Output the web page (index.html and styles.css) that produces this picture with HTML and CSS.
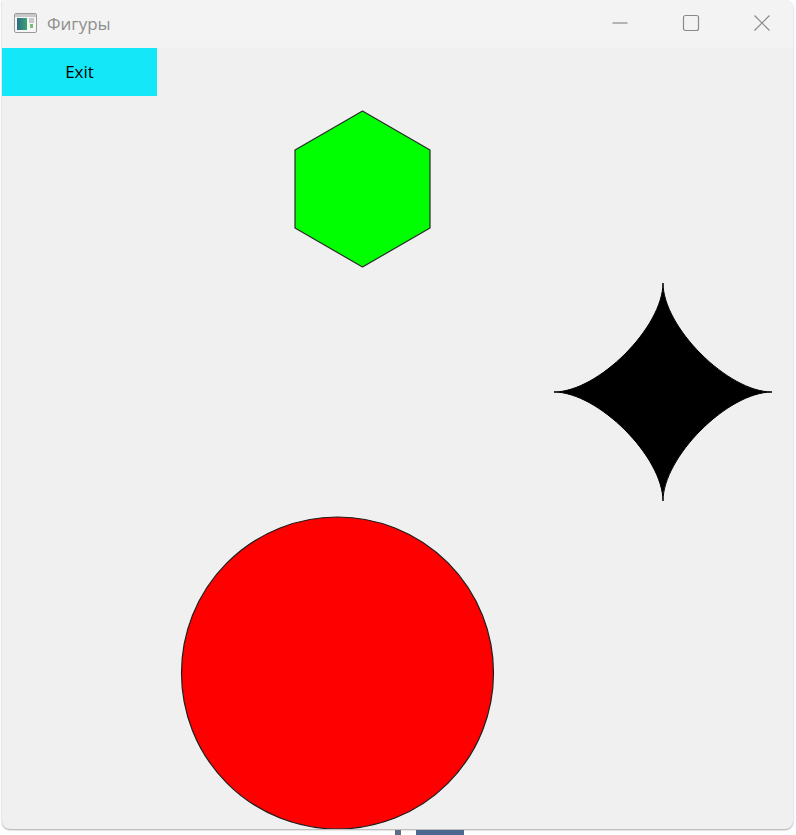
FILE: index.html
```html
<!DOCTYPE html>
<html lang="ru">
<head>
<meta charset="utf-8">
<title>Фигуры</title>
<link rel="stylesheet" href="styles.css">
</head>
<body>
<div class="window">
  <div class="titlebar">
    <div class="title">
      <svg class="app-icon" width="23" height="20" viewBox="0 0 23 20">
        <rect x="0.5" y="0.5" width="22" height="19" rx="1.5" fill="#f6f6f6" stroke="#9a9a9a"/>
        <rect x="1" y="1" width="21" height="3" fill="#c8c8c8"/>
        <defs>
          <linearGradient id="g" x1="0" y1="0" x2="1" y2="0">
            <stop offset="0" stop-color="#2e6a8a"/>
            <stop offset="1" stop-color="#3aa56a"/>
          </linearGradient>
        </defs>
        <rect x="3" y="5" width="10" height="12" fill="url(#g)"/>
        <rect x="15" y="5" width="5" height="5" fill="#c9c9c9"/>
        <rect x="16" y="11" width="3" height="4" fill="#7ac07a"/>
      </svg>
      <span class="title-text">Фигуры</span>
    </div>
    <div class="controls">
      <span class="ctl">
        <svg width="18" height="18" viewBox="0 0 18 18"><line x1="1.5" y1="9" x2="16.5" y2="9" stroke="#8a8a8a" stroke-width="1.2"/></svg>
      </span>
      <span class="ctl">
        <svg width="18" height="18" viewBox="0 0 18 18"><rect x="1.5" y="1.5" width="15" height="15" rx="2" fill="none" stroke="#8a8a8a" stroke-width="1.2"/></svg>
      </span>
      <span class="ctl">
        <svg width="18" height="18" viewBox="0 0 18 18"><path d="M1.5 1.5 L16.5 16.5 M16.5 1.5 L1.5 16.5" stroke="#8a8a8a" stroke-width="1.2"/></svg>
      </span>
    </div>
  </div>
  <div class="client">
    <button class="exit-btn">Exit</button>
    <svg class="canvas" width="791" height="781" viewBox="0 0 791 781">
      <polygon class="hex" points="360.5,63 428,102 428,180 360.5,219 293,180 293,102"/>
      <path class="star" d="M661 235 C661 279 726 344 770 344 C726 344 661 409 661 453 C661 409 596 344 552 344 C596 344 661 279 661 235 Z"/>
      <circle class="circle" cx="335.5" cy="625" r="156"/>
    </svg>
  </div>
</div>
<div class="below">
  <span class="task a"></span><span class="task b"></span>
</div>
</body>
</html>
```

FILE: styles.css
```css
html, body {
  margin: 0;
  padding: 0;
  background: #ffffff;
  width: 796px;
  height: 835px;
  overflow: hidden;
}

.window {
  margin-left: 2px;
  width: 791px;
  height: 829px;
  background: #f0f0f0;
  border-radius: 0 8px 8px 8px;
  box-shadow: 0 1px 2px rgba(0,0,0,0.35);
  overflow: hidden;
  display: flex;
  flex-direction: column;
}

.titlebar {
  height: 48px;
  background: #f3f3f3;
  display: flex;
  align-items: center;
  justify-content: space-between;
  flex-shrink: 0;
}

.title {
  display: flex;
  align-items: center;
  padding-left: 12px;
  gap: 10px;
  margin-top: -2px;
}

.app-icon { display: block; }

.title-text {
  font-family: "Open Sans", "Noto Sans", sans-serif;
  font-size: 17px;
  color: #8e8e8e;
}

.controls {
  display: flex;
  align-items: center;
  margin-top: -2px;
  margin-right: -4px;
}

.ctl {
  width: 71px;
  display: flex;
  justify-content: center;
}

.ctl svg { display: block; }

.client {
  position: relative;
  flex: 1;
}

.exit-btn {
  position: relative;
  z-index: 1;
  display: block;
  width: 155px;
  height: 48px;
  margin: 0;
  border: none;
  background: #14e8f8;
  font-family: "Open Sans", "Noto Sans", sans-serif;
  font-size: 17px;
  color: #000;
  padding: 0 0 2px 0;
}

.canvas {
  position: absolute;
  left: 0;
  top: 0;
}

.hex {
  fill: #00ff00;
  stroke: #2a2a2a;
  stroke-width: 1.2;
  stroke-linejoin: round;
}

.star {
  fill: #000000;
  stroke: #000000;
  stroke-width: 1;
}

.circle {
  fill: #ff0000;
  stroke: #1e1e1e;
  stroke-width: 1.2;
}

.below {
  display: flex;
  padding-left: 395px;
  height: 6px;
  gap: 5px;
}

.task { display: block; height: 5px; margin-top: 1px; }
.task.a { width: 6px; background: #5a6e88; }
.task.b { width: 48px; margin-left: 10px; background: #4c6a90; }
```
